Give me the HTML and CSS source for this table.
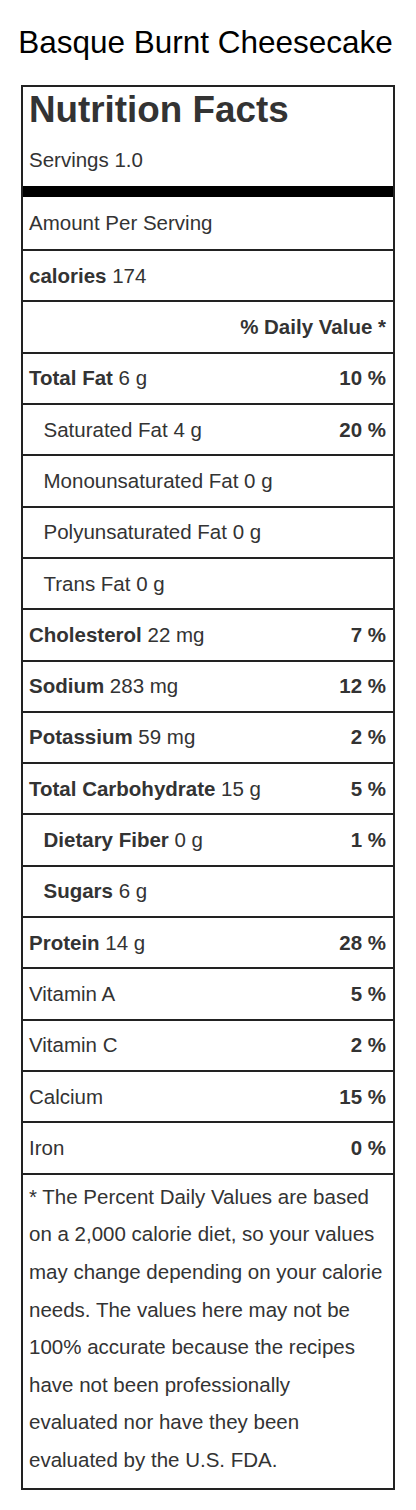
FILE: index.html
```html
<!DOCTYPE html>
<html lang="en">
  <head>
    <meta charset="UTF-8" />
    <meta name="viewport" content="width=device-width, initial-scale=1.0" />
    <title>Basque Burnt Cheesecake - Nutrition</title>
    <link rel="stylesheet" href="styles.css">
  </head>
  <body>
    <main>
      <h1 class="recipe-title">Basque Burnt Cheesecake</h1>

      <section class="label">
        <header class="label-head">
          <h2>Nutrition Facts</h2>
          <p>Servings 1.0</p>
        </header>

        <div class="row is-first">Amount Per Serving</div>
        <div class="row"><span><b>calories</b> 174</span></div>
        <div class="row is-right"><b>% Daily Value *</b></div>

        <div class="row"><span><b>Total Fat</b> 6 g</span><b>10 %</b></div>
        <div class="row is-sub"><span>Saturated Fat 4 g</span><b>20 %</b></div>
        <div class="row is-sub"><span>Monounsaturated Fat 0 g</span></div>
        <div class="row is-sub"><span>Polyunsaturated Fat 0 g</span></div>
        <div class="row is-sub"><span>Trans Fat 0 g</span></div>
        <div class="row"><span><b>Cholesterol</b> 22 mg</span><b>7 %</b></div>
        <div class="row"><span><b>Sodium</b> 283 mg</span><b>12 %</b></div>
        <div class="row"><span><b>Potassium</b> 59 mg</span><b>2 %</b></div>
        <div class="row"><span><b>Total Carbohydrate</b> 15 g</span><b>5 %</b></div>
        <div class="row is-sub"><span><b>Dietary Fiber</b> 0 g</span><b>1 %</b></div>
        <div class="row is-sub"><span><b>Sugars</b> 6 g</span></div>
        <div class="row"><span><b>Protein</b> 14 g</span><b>28 %</b></div>
        <div class="row"><span>Vitamin A</span><b>5 %</b></div>
        <div class="row"><span>Vitamin C</span><b>2 %</b></div>
        <div class="row"><span>Calcium</span><b>15 %</b></div>
        <div class="row"><span>Iron</span><b>0 %</b></div>

        <p class="label-note">
          * The Percent Daily Values are based on a 2,000 calorie diet, so your
          values may change depending on your calorie needs. The values here may
          not be 100% accurate because the recipes have not been professionally
          evaluated nor have they been evaluated by the U.S. FDA.
        </p>
      </section>
    </main>
  </body>
</html>
```

FILE: styles.css
```css
*,
*::before,
*::after {
  box-sizing: border-box;
  margin: 0;
  padding: 0;
}

body {
  font-family: 'Liberation Sans', Arial, sans-serif;
  background: #fff;
  color: #333;
}

main {
  padding: 23.5px 0 20px;
}

.recipe-title {
  font-size: 31.5px;
  font-weight: 400;
  line-height: 36px;
  color: #000;
  text-align: center;
  white-space: nowrap;
  padding-right: 5px;
  margin-bottom: 25.5px;
}

.label {
  margin: 0 21px;
  border: 2px solid #222;
  font-size: 20.5px;
  line-height: 24px;
}

.label-head {
  padding: 3px 6px 14px;
  border-bottom: 11px solid #000;

  & h2 {
    font-size: 36.8px;
    line-height: 40px;
    font-weight: 700;
    margin-bottom: 18px;
  }
}

.row {
  display: flex;
  justify-content: space-between;
  align-items: center;
  padding: 12.67px 7px 12.66px 6px;
  border-bottom: 2px solid #222;

  &.is-first {
    padding-top: 14px;
    padding-bottom: 14px;
  }

  &.is-right {
    justify-content: flex-end;
  }

  &.is-sub {
    padding-left: 20.5px;
  }

  & b {
    font-weight: 700;
  }
}

.label-note {
  padding: 3.2px 9px 9.2px 6px;
  line-height: 37.6px;
}
```
